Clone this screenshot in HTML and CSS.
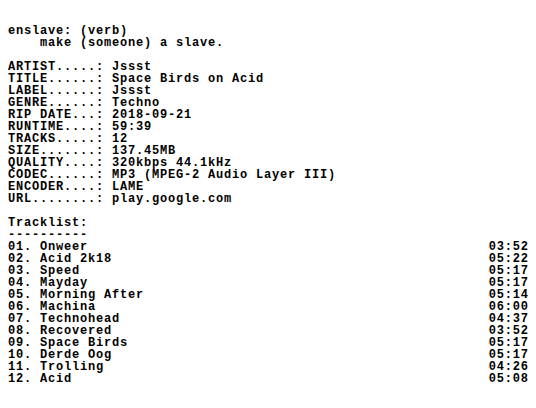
FILE: index.html
```html
<!DOCTYPE html>
<html>
<head>
<meta charset="utf-8">
<link rel="stylesheet" href="styles.css">
</head>
<body>
<main class="nfo">
<pre class="block">enslave: (verb)
    make (someone) a slave.</pre>
<pre class="block">ARTIST.....: Jssst
TITLE......: Space Birds on Acid
LABEL......: Jssst
GENRE......: Techno
RIP DATE...: 2018-09-21
RUNTIME....: 59:39
TRACKS.....: 12
SIZE.......: 137.45MB
QUALITY....: 320kbps 44.1kHz
CODEC......: MP3 (MPEG-2 Audio Layer III)
ENCODER....: LAME
URL........: play.google.com</pre>
<section class="block">
<pre class="heading">Tracklist:
----------</pre>
<ol class="tracks">
<li class="track"><span>01. Onweer</span><span class="time">03:52</span></li>
<li class="track"><span>02. Acid 2k18</span><span class="time">05:22</span></li>
<li class="track"><span>03. Speed</span><span class="time">05:17</span></li>
<li class="track"><span>04. Mayday</span><span class="time">05:17</span></li>
<li class="track"><span>05. Morning After</span><span class="time">05:14</span></li>
<li class="track"><span>06. Machina</span><span class="time">06:00</span></li>
<li class="track"><span>07. Technohead</span><span class="time">04:37</span></li>
<li class="track"><span>08. Recovered</span><span class="time">03:52</span></li>
<li class="track"><span>09. Space Birds</span><span class="time">05:17</span></li>
<li class="track"><span>10. Derde Oog</span><span class="time">05:17</span></li>
<li class="track"><span>11. Trolling</span><span class="time">04:26</span></li>
<li class="track"><span>12. Acid</span><span class="time">05:08</span></li>
</ol>
</section>
</main>
</body>
</html>
```
FILE: styles.css
```css
html, body {
  margin: 0;
  background: #ffffff;
}
body {
  padding: 25px 8px 0 8px;
  color: #000000;
  font-family: "Liberation Mono", "Courier New", monospace;
  font-weight: bold;
  font-size: 12px;
  letter-spacing: 0.8px;
  line-height: 12px;
}
.nfo {
  display: flex;
  flex-direction: column;
  gap: 12px;
}
pre {
  margin: 0;
  font: inherit;
  white-space: pre;
}
.block {
  margin: 0;
}
.tracks {
  list-style: none;
  margin: 0;
  padding: 0;
}
.track {
  display: flex;
  justify-content: space-between;
  white-space: pre;
}
.time {
  margin-right: -0.8px;
}
```
